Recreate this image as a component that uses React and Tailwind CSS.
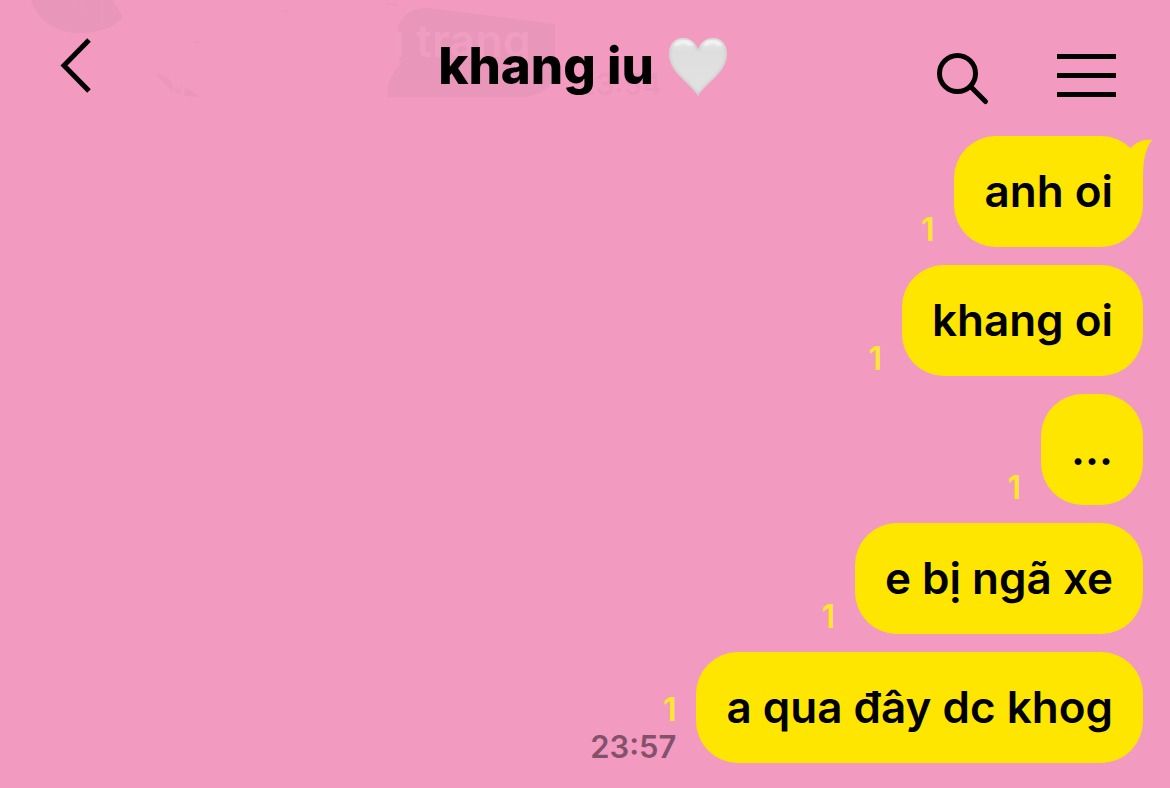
import React from 'react';

const messages = [
  { id: 1, text: 'anh oi', unread: 1, tail: true },
  { id: 2, text: 'khang oi', unread: 1 },
  { id: 3, text: '...', unread: 1 },
  { id: 4, text: 'e bị ngã xe', unread: 1 },
  { id: 5, text: 'a qua đây dc khog', unread: 1, time: '23:57' },
];

// Older messages that show faintly through the header
function FadedHistory() {
  return (
    <svg className="absolute left-0 top-0 pointer-events-none" width="700" height="100" viewBox="0 0 700 100" aria-hidden="true">
      <path d="M31 0 C37 20 55 33 80 33 C98 33 114 28 123 17 L113 0 Z" fill="#e896b9" />
      <path d="M70 2 L86 14 L70 31 M80 0 L87 14 M102 0 V26" fill="none" stroke="#ea98ba" strokeWidth="3" />
      <path d="M157 73 L171 80 L174 91 C167 87 161 81 157 73 Z M176 82 L178 93 L175 92 Z M181 85 L180 95 L178 93 Z M185 87 L200 97 L184 96 Z" fill="#ea97bb" />
      <path d="M193 42 h7 M281 11 h8 M386 4 q6 -2 11 2" stroke="#e896b9" strokeWidth="1" fill="none" />
      <path d="M398 30 C400 15 412 8 428 8 L555 24 V78 C548 91 535 97 520 97 H387 C388 83 392 72 400 65 Z" fill="#e896b9" />
      <text x="393" y="57" fontSize="45" fontWeight="600" fill="#f09dc2">ı trang</text>
      <text x="577" y="95" fontSize="30" fontWeight="500" fill="#ed96bb">23:54</text>
    </svg>
  );
}

function WhiteHeart() {
  return (
    <svg className="w-[60px] h-[60px]" viewBox="0 0 60 60" role="img" aria-label="white heart">
      <defs>
        <linearGradient id="heartFill" x1="0" y1="0" x2="0" y2="1">
          <stop offset="0" stopColor="#ececec" />
          <stop offset="0.25" stopColor="#dedede" />
          <stop offset="1" stopColor="#e2e2e2" />
        </linearGradient>
        <filter id="heartSoft" x="-20%" y="-20%" width="140%" height="140%">
          <feGaussianBlur stdDeviation="1.5" />
        </filter>
        <clipPath id="heartClip">
          <path d="M30 60 C23 47 1 37 1 18 C1 8 7 2 15 2 C22 2 27 6 30 13 C33 6 38 2 45 2 C53 2 59 8 59 18 C59 37 37 47 30 60 Z" />
        </clipPath>
      </defs>
      <g clipPath="url(#heartClip)">
        <rect width="60" height="60" fill="url(#heartFill)" />
        <path d="M30 60 C23 47 1 37 1 18 C1 8 7 2 15 2 C22 2 27 6 30 13 C33 6 38 2 45 2 C53 2 59 8 59 18 C59 37 37 47 30 60 Z" fill="none" stroke="#c4c4c4" strokeWidth="2" filter="url(#heartSoft)" />
        <path d="M8 9 C11 5 19 4 23 9 M37 9 C41 4 49 5 52 9" fill="none" stroke="#f8f8f8" strokeWidth="3" strokeLinecap="round" filter="url(#heartSoft)" />
      </g>
    </svg>
  );
}

function ChatHeader() {
  return (
    <header className="relative grid grid-cols-[1fr_auto_1fr] items-start pl-[50px] pr-[54px] pt-[36px] h-[136px]">
      <FadedHistory />
      <button type="button" aria-label="Back" className="relative justify-self-start pl-[10px]">
        <svg className="block" width="32" height="60" viewBox="0 0 32 60" fill="none" stroke="#000" strokeWidth="5">
          <path d="M29 4 L4 29.500 L29 55" />
        </svg>
      </button>
      <h1 className="relative flex items-center gap-[14px] text-[51px] leading-[60px] font-extrabold text-black">
        khang iu
        <WhiteHeart />
      </h1>
      <div className="relative flex items-start justify-self-end gap-[66px] pt-4">
        <button type="button" aria-label="Search">
          <svg className="block" width="54" height="54" viewBox="0 0 54 54" fill="none" stroke="#000" strokeWidth="5">
            <circle cx="21.500" cy="21.500" r="18" />
            <path d="M35 35 L49.500 49.500" strokeLinecap="round" />
          </svg>
        </button>
        <button type="button" aria-label="Menu">
          <svg className="block" width="60" height="48" viewBox="0 0 60 48" stroke="#000" strokeWidth="5">
            <path d="M1 4.500 H60 M1 23.500 H60 M1 42.500 H60" />
          </svg>
        </button>
      </div>
    </header>
  );
}

function Message({ text, unread, time, tail }) {
  return (
    <li className="flex items-end justify-end gap-5">
      <div className="flex flex-col items-end">
        <span className="text-[32px] leading-[34px] font-semibold text-[#fee72d]">{unread}</span>
        {time && <time className="mt-1 text-[31px] leading-[32px] font-semibold text-[#83526a]">{time}</time>}
      </div>
      <p className="relative rounded-[42px] bg-[#ffe600] px-[30px] py-[28px] text-[44px] leading-[55px] font-semibold text-black">
        {text}
        {tail && (
          <svg className="absolute top-0 -right-[9px]" width="36" height="42" viewBox="0 0 36 42" aria-hidden="true">
            <path d="M14 13 C20 6 28 3 36 4 C30 12 27 22 27 42 L5 24 Z" fill="#ffe600" />
          </svg>
        )}
      </p>
    </li>
  );
}

export default function App() {
  return (
    <div className="min-h-screen overflow-hidden bg-[#f39ac1] font-['Inter','Liberation_Sans',sans-serif]">
      <ChatHeader />
      <main>
        <ul className="flex flex-col gap-[18px] pl-4 pr-[27px] pb-[25px]">
          {messages.map((message) => (
            <Message key={message.id} {...message} />
          ))}
        </ul>
      </main>
    </div>
  );
}
